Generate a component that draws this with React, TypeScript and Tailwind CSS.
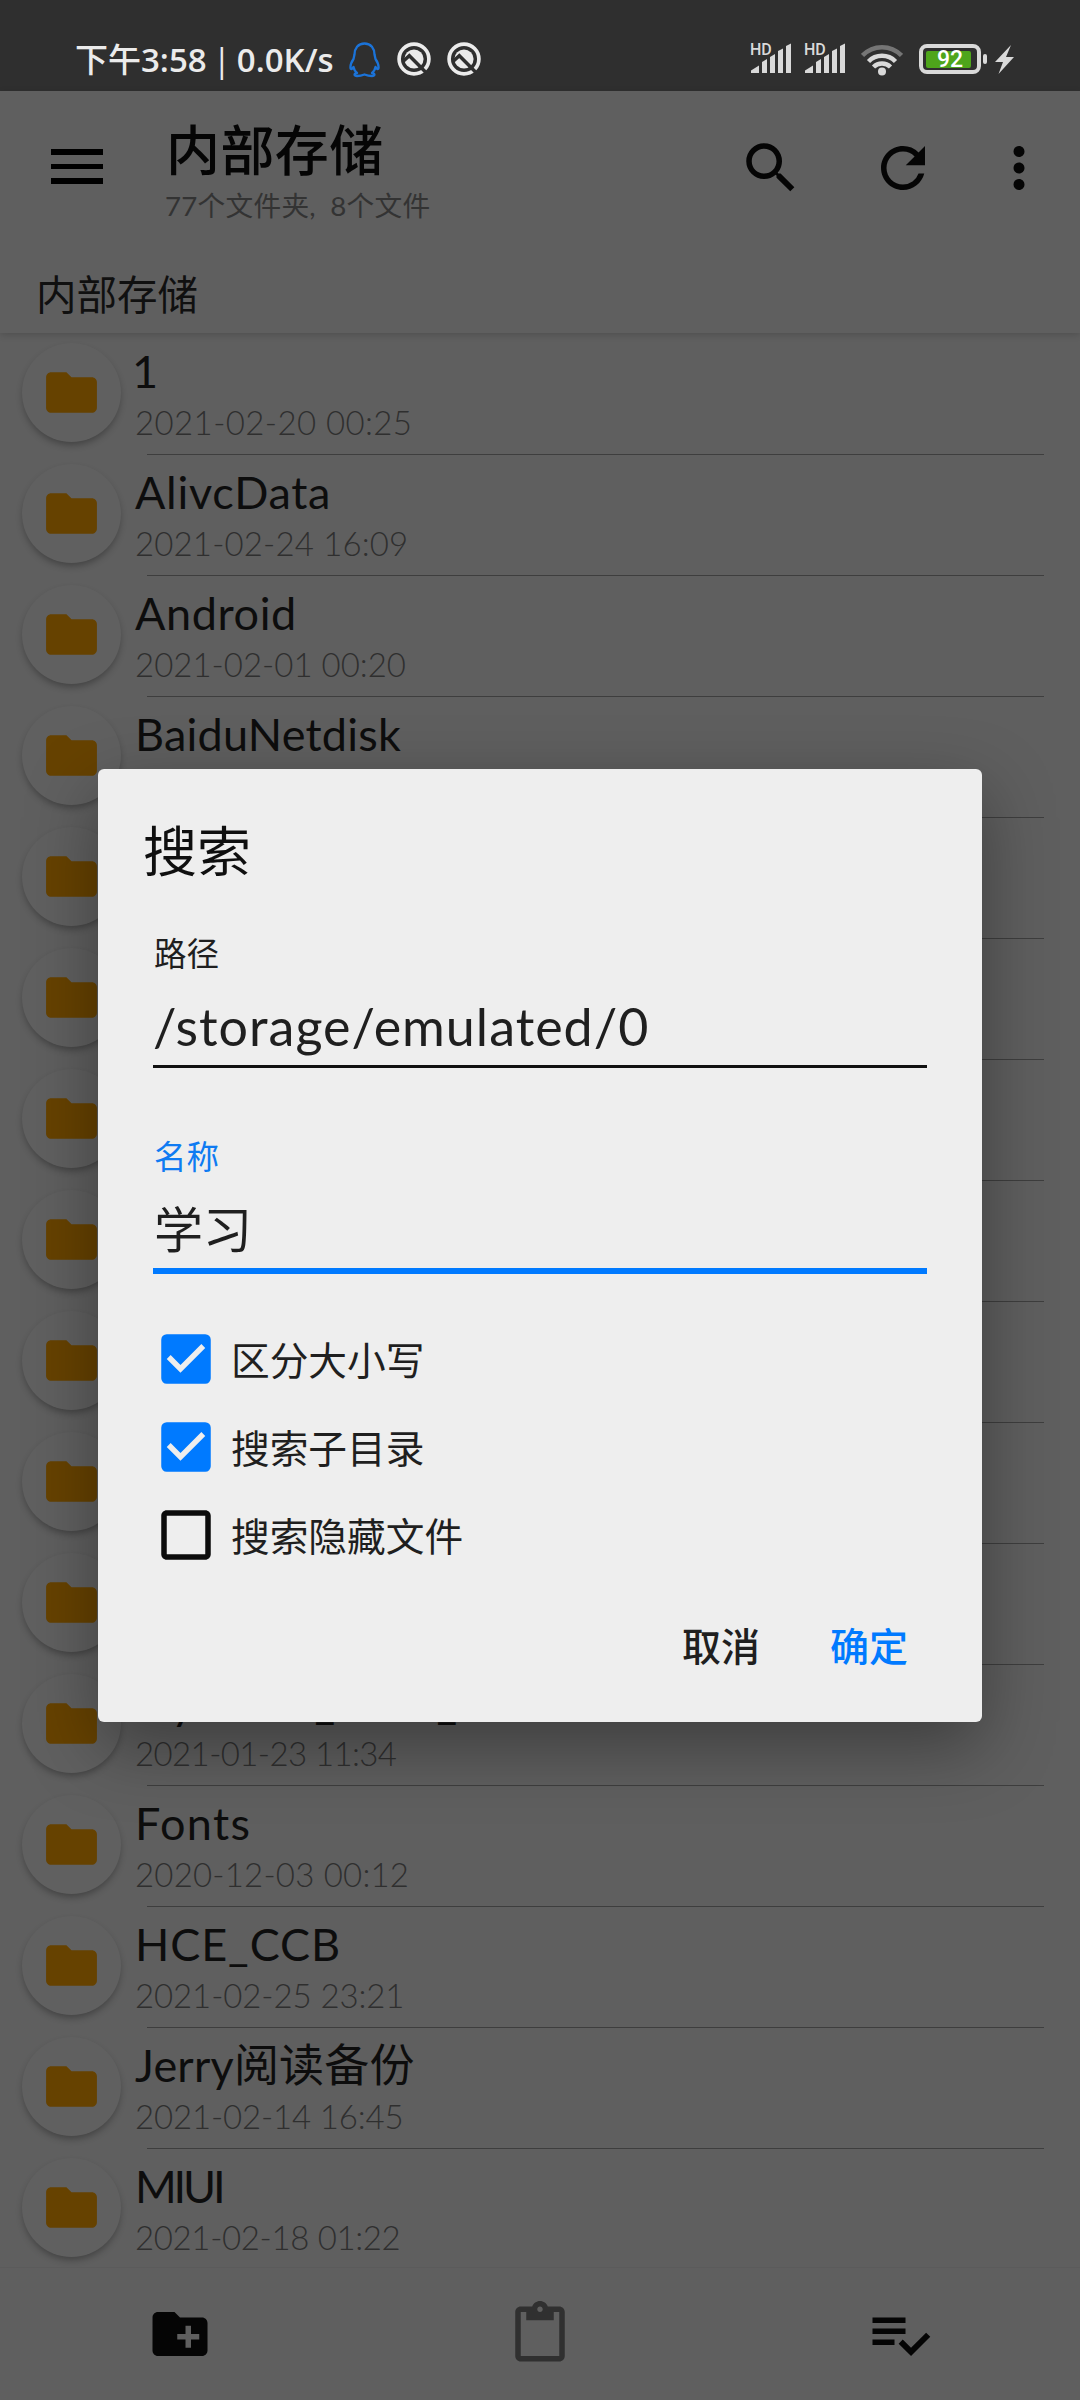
import React from "react";
import {
  MdCheckBox,
  MdCheckBoxOutlineBlank,
  MdFolder,
  MdMoreVert,
  MdRefresh,
  MdSearch,
} from "react-icons/md";

type Entry = { name: string; date: string; nameClass: string; dateClass: string };

const entries: Entry[] = [
  { name: "1", date: "2021-02-20 00:25", nameClass: "-ml-[3px]", dateClass: "tracking-[0.4px]" },
  { name: "AlivcData", date: "2021-02-24 16:09", nameClass: "tracking-[0.7px]", dateClass: "tracking-[0.15px]" },
  { name: "Android", date: "2021-02-01 00:20", nameClass: "tracking-[0.6px]", dateClass: "" },
  { name: "BaiduNetdisk", date: "", nameClass: "tracking-[0.2px]", dateClass: "" },
  { name: "", date: "", nameClass: "", dateClass: "" },
  { name: "", date: "", nameClass: "", dateClass: "" },
  { name: "", date: "", nameClass: "", dateClass: "" },
  { name: "", date: "", nameClass: "", dateClass: "" },
  { name: "", date: "", nameClass: "", dateClass: "" },
  { name: "", date: "", nameClass: "", dateClass: "" },
  { name: "", date: "", nameClass: "", dateClass: "" },
  { name: "Dyhome_local_", date: "2021-01-23 11:34", nameClass: "tracking-[1.8px]", dateClass: "tracking-[-0.6px]" },
  { name: "Fonts", date: "2020-12-03 00:12", nameClass: "tracking-[1.4px]", dateClass: "tracking-[0.2px]" },
  { name: "HCE_CCB", date: "2021-02-25 23:21", nameClass: "tracking-[0.9px]", dateClass: "tracking-[-0.1px]" },
  { name: "Jerry阅读备份", date: "2021-02-14 16:45", nameClass: "tracking-[0.2px]", dateClass: "tracking-[-0.15px]" },
  { name: "MIUI", date: "2021-02-18 01:22", nameClass: "tracking-[-3.2px]", dateClass: "tracking-[-0.35px]" },
];

function PenguinIcon() {
  return (
    <svg width="31" height="36" viewBox="0 0 31 36" fill="none" stroke="#1b73d8" strokeWidth="2.300" strokeLinejoin="round">
      <path d="M15.500 1.500C9 1.500 5.500 6.500 5.500 12.500L4.500 17C2.500 20 1.200 23.500 1.500 26C1.800 28 3 27 4.500 25C5 27.500 6 29.500 8 31C5 31.500 4.500 34 8 34C11 34 13 33.500 15.500 32.500C18 33.500 20 34 23 34C26.500 34 26 31.500 23 31C25 29.500 26 27.500 26.500 25C28 27 29.200 28 29.500 26C29.800 23.500 28.500 20 26.500 17L25.500 12.500C25.500 6.500 22 1.500 15.500 1.500Z" />
    </svg>
  );
}

function QualityIcon() {
  return (
    <svg width="34" height="34" viewBox="0 0 34 34" fill="none">
      <circle cx="17" cy="17" r="14.900" stroke="#ebebeb" strokeWidth="3.700" />
      <circle cx="17" cy="17" r="9.600" fill="#ebebeb" />
      <path d="M6 19.500L12.300 13.700L29 30.500" stroke="#2f2f2f" strokeWidth="3.400" />
    </svg>
  );
}

function Signal() {
  return (
    <svg width="42" height="40" viewBox="0 -8 42 40" fill="#d9d9d9">
      <text x="0" y="12.500" fontSize="16" fontWeight="500" fontFamily="Roboto, sans-serif">HD</text>
      <path d="M1 31V28.500L9 23.500V31ZM12 31V20L17 17V31ZM20 31V15L25 12V31ZM28 31V9L33 6.500V31ZM36 31V4L41 1.500V31Z" />
    </svg>
  );
}

function Wifi() {
  return (
    <svg width="42" height="32" viewBox="0 0 42 32" fill="none" stroke="#d9d9d9" strokeWidth="4.500">
      <path d="M1.500 11.500A27 27 0 0 1 40.500 11.500" stroke="#757575" />
      <path d="M7.500 17.500A19 19 0 0 1 34.500 17.500" />
      <path d="M12.500 23A12 12 0 0 1 29.500 23" />
      <circle cx="21" cy="27.500" r="4" fill="#d9d9d9" stroke="none" />
    </svg>
  );
}

function StatusBar() {
  return (
    <div className="flex h-[91px] items-start bg-[#2f2f2f] pt-[39px] text-[#ebebeb]">
      <div className="ml-[75px] flex h-[42px] w-[265px] items-center whitespace-nowrap font-['Open_Sans','Noto_Sans_CJK_SC',sans-serif] text-[33px] font-medium">
        <span>下午</span>
        <span className="font-semibold">3:58</span>
        <span className="ml-[6px]">|</span>
        <span className="ml-[6px] font-semibold">0.0K/s</span>
      </div>
      <div className="ml-[9px] mt-[3px]"><PenguinIcon /></div>
      <div className="ml-[17px] mt-[3px]"><QualityIcon /></div>
      <div className="ml-[16px] mt-[3px]"><QualityIcon /></div>
      <div className="-mt-[5px] ml-[269px]"><Signal /></div>
      <div className="-mt-[5px] ml-[12px]"><Signal /></div>
      <div className="ml-[15px] mt-[5px]"><Wifi /></div>
      <div className="ml-[16px] mt-[5px] flex h-[30px] w-[62px] items-center rounded-[8px] border-4 border-[#d9d9d9] pl-[3px]">
        <div className="flex h-[17px] w-[45px] items-center justify-center rounded-[2px] bg-[#4ea51b] pl-[3px] font-[Roboto] text-[23px] font-medium leading-none text-white">92</div>
      </div>
      <div className="ml-[2px] mt-[15px] h-[10px] w-[4px] rounded-[2px] bg-[#d9d9d9]" />
      <svg className="ml-[8px] mt-[6px]" width="19" height="29" viewBox="0 0 19 29" fill="#d9d9d9"><path d="M16 0L0 17H8L3.500 29L19 12H11Z" /></svg>
    </div>
  );
}

function TopBar() {
  return (
    <header className="relative z-10 h-[242px] bg-[#5f5f5f] shadow-[0_2px_7px_rgba(0,0,0,0.16)]">
      <div className="flex h-[153px] items-start">
        <div className="ml-[51px] mt-[58px] flex w-[52px] flex-col gap-[9px]">
          <div className="h-[5.600px] bg-black" />
          <div className="h-[5.600px] bg-black" />
          <div className="h-[5.600px] bg-black" />
        </div>
        <div className="ml-[62px] mt-[24px] w-[573px] whitespace-nowrap">
          <div className="h-[72px] pl-px text-[54px] font-medium leading-[72px] tracking-[0.4px] text-[#050505]">内部存储</div>
          <div className="h-[40px] text-[27.700px] leading-[38px] tracking-[0.25px] text-[#333]">77个文件夹,<span className="ml-[7px]"> 8个文件</span></div>
        </div>
        <MdSearch className="mt-[44px] size-[66px]" />
        <MdRefresh className="ml-[66px] mt-[44px] size-[66px]" />
        <MdMoreVert className="ml-[50px] mt-[44px] size-[66px]" />
      </div>
      <div className="pl-[36px] pt-[21px] text-[40.500px] leading-[60px] text-[#101010]">内部存储</div>
    </header>
  );
}

function Row({ entry }: { entry: Entry }) {
  return (
    <li className="flex h-[121px] shrink-0">
      <div className="ml-[22px] mt-[9px] flex size-[99px] shrink-0 items-center justify-center rounded-full bg-[#606060] shadow-[0_4px_7px_-1px_rgba(0,0,0,0.3)]">
        <MdFolder className="size-[61px] text-[#664200]" />
      </div>
      <div className="relative ml-[14px] w-[909px] whitespace-nowrap">
        <div className={"h-[72px] text-[45px] leading-[74px] text-[#0d0d0d] " + entry.nameClass}>{entry.name}</div>
        <div className={"h-[40px] text-[33px] font-light leading-[33px] text-[#2f2f2f] " + entry.dateClass}>{entry.date}</div>
        <div className="absolute bottom-0 left-[12px] right-0 h-px bg-[#3e3e3e]" />
      </div>
    </li>
  );
}

function BottomBar() {
  return (
    <nav className="relative z-10 grid h-[133px] grid-cols-3 justify-items-center border-t border-[#5b5b5b] bg-[#5f5f5f] pt-[33px]">
      <svg className="size-[66px]" viewBox="0 0 24 24" fill="#050505"><path d="M20 6h-8l-2-2H4c-1.110 0-1.990.890-1.990 2L2 18c0 1.110.890 2 2 2h16c1.110 0 2-.890 2-2V8c0-1.110-.890-2-2-2zm-1 8h-3v3h-2v-3h-3v-2h3V9h2v3h3v2z" /></svg>
      <svg className="size-[66px]" viewBox="0 0 24 24" fill="#303030"><path d="M19 2h-4.180C14.400.840 13.300 0 12 0c-1.300 0-2.400.840-2.820 2H5c-1.100 0-2 .900-2 2v16c0 1.100.900 2 2 2h14c1.100 0 2-.900 2-2V4c0-1.100-.900-2-2-2zm-7 0c.550 0 1 .450 1 1s-.450 1-1 1-1-.450-1-1 .450-1 1-1zm7 18H5V4h2v3h10V4h2v16z" /></svg>
      <svg className="size-[66px]" viewBox="0 0 24 24" fill="#050505"><path d="M14 10H2v2h12v-2zm0-4H2v2h12V6zM2 16h8v-2H2v2zm19.500-4.500L23 13l-6.990 7-4.510-4.500L13 14l3.010 3 5.490-5.500z" /></svg>
    </nav>
  );
}

function Option({ label, checked }: { label: string; checked: boolean }) {
  return (
    <label className="flex h-[88px] items-center gap-[12px]">
      {checked ? <MdCheckBox className="size-[66px] text-[#007aff]" /> : <MdCheckBoxOutlineBlank className="size-[66px] text-[#0c0c0c]" />}
      <span className="mt-[2px] text-[38.700px] leading-[60px]">{label}</span>
    </label>
  );
}

function SearchDialog() {
  return (
    <section className="absolute left-[98px] top-[769px] z-20 h-[953px] w-[884px] rounded-[6px] bg-[#eee] text-[#1f1f1f] shadow-[0_24px_70px_rgba(0,0,0,0.36)]">
      <h2 className="pl-[45px] pt-[43px] text-[54px] leading-[80px] text-[#0f0f0f]">搜索</h2>
      <div className="mx-[55px]">
        <div className="mt-[38px] pl-px text-[32.500px] leading-[48px]">路径</div>
        <div className="mt-[10px] h-[80px] border-b-[3px] border-[#101010] text-[52px] leading-[76px] tracking-[1px]">/storage/emulated/0</div>
        <div className="mt-[65px] pl-px text-[32.500px] leading-[48px] text-[#0f7bf2]">名称</div>
        <div className="mt-[10px] h-[83px] border-b-[6px] border-[#007aff] pl-px text-[49px] leading-[77px]">学习</div>
      </div>
      <div className="ml-[55px] mt-[41px]">
        <Option label="区分大小写" checked />
        <Option label="搜索子目录" checked />
        <Option label="搜索隐藏文件" checked={false} />
      </div>
      <div className="mt-[37px] flex justify-end gap-[70px] pr-[74px] text-[39px] font-medium leading-[60px]">
        <button>取消</button>
        <button className="text-[#007aff]">确定</button>
      </div>
    </section>
  );
}

export default function App() {
  return (
    <div className="relative flex h-[2400px] w-[1080px] flex-col overflow-hidden bg-[#5f5f5f] font-[Lato,'Noto_Sans_CJK_SC',sans-serif] text-[#050505]">
      <StatusBar />
      <TopBar />
      <ul className="flex h-[1934px] flex-col overflow-hidden pt-px">
        {entries.map((e, i) => <Row key={i} entry={e} />)}
      </ul>
      <BottomBar />
      <SearchDialog />
    </div>
  );
}
